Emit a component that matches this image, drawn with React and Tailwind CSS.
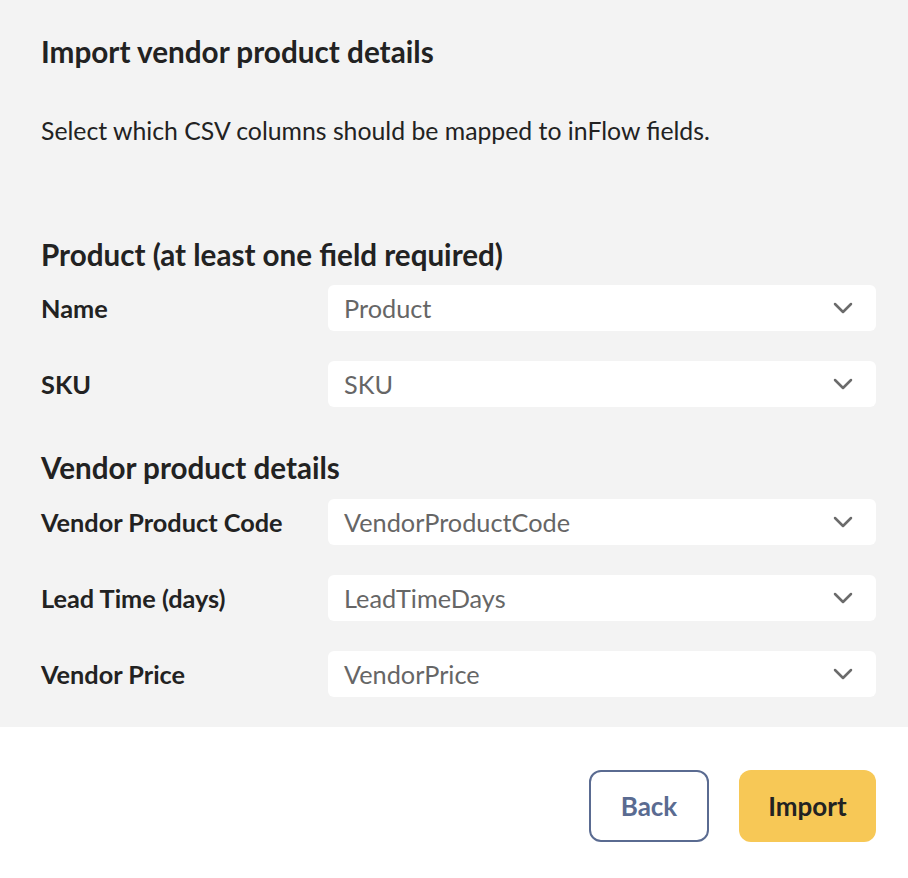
import React from 'react';

function Chevron() {
  return (
    <svg width="20" height="12" viewBox="0 0 20 12" fill="none" className="shrink-0">
      <path d="M2 2l8 8 8-8" stroke="#6b6b6b" strokeWidth="2.5" strokeLinecap="round" strokeLinejoin="round" />
    </svg>
  );
}

function FieldRow({ label, value }) {
  return (
    <div className="flex items-center">
      <div className="w-[287px] text-[25.3px] leading-[30px] font-bold text-[#222]">{label}</div>
      <div className="flex-1 h-[46px] bg-white rounded-[6px] flex items-center justify-between pl-4 pr-[23px]">
        <span className="text-[25.3px] leading-[30px] text-[#666]">{value}</span>
        <Chevron />
      </div>
    </div>
  );
}

export default function App() {
  return (
    <div className="w-[908px] h-[878px] bg-white" style={{ fontFamily: 'Lato, "Open Sans", sans-serif' }}>
      <div className="bg-[#f3f3f3] pl-[41px] pr-[32px] pt-[34px] pb-[30px]">
        <h1 className="text-[29.7px] leading-[36px] font-bold text-[#222]">Import vendor product details</h1>
        <p className="mt-[46px] text-[24.8px] leading-[30px] text-[#222]">
          Select which CSV columns should be mapped to inFlow fields.
        </p>

        <h2 className="mt-[91px] text-[29.6px] leading-[36px] font-bold text-[#222]">Product (at least one field required)</h2>
        <div className="mt-[12px] flex flex-col gap-[30px]">
          <FieldRow label="Name" value="Product" />
          <FieldRow label="SKU" value="SKU" />
        </div>

        <h2 className="mt-[43px] text-[29.6px] leading-[36px] font-bold text-[#222]">Vendor product details</h2>
        <div className="mt-[13px] flex flex-col gap-[30px]">
          <FieldRow label="Vendor Product Code" value="VendorProductCode" />
          <FieldRow label="Lead Time (days)" value="LeadTimeDays" />
          <FieldRow label="Vendor Price" value="VendorPrice" />
        </div>
      </div>

      <div className="flex justify-end gap-[30px] pt-[43px] pr-[32px]">
        <button className="w-[120px] h-[72px] rounded-[12px] border-[2.5px] border-[#5a6b91] text-[#5a6b91] text-[26px] font-bold bg-white">
          Back
        </button>
        <button className="w-[137px] h-[72px] rounded-[12px] bg-[#f7c856] text-[#222] text-[26px] font-bold">
          Import
        </button>
      </div>
    </div>
  );
}
